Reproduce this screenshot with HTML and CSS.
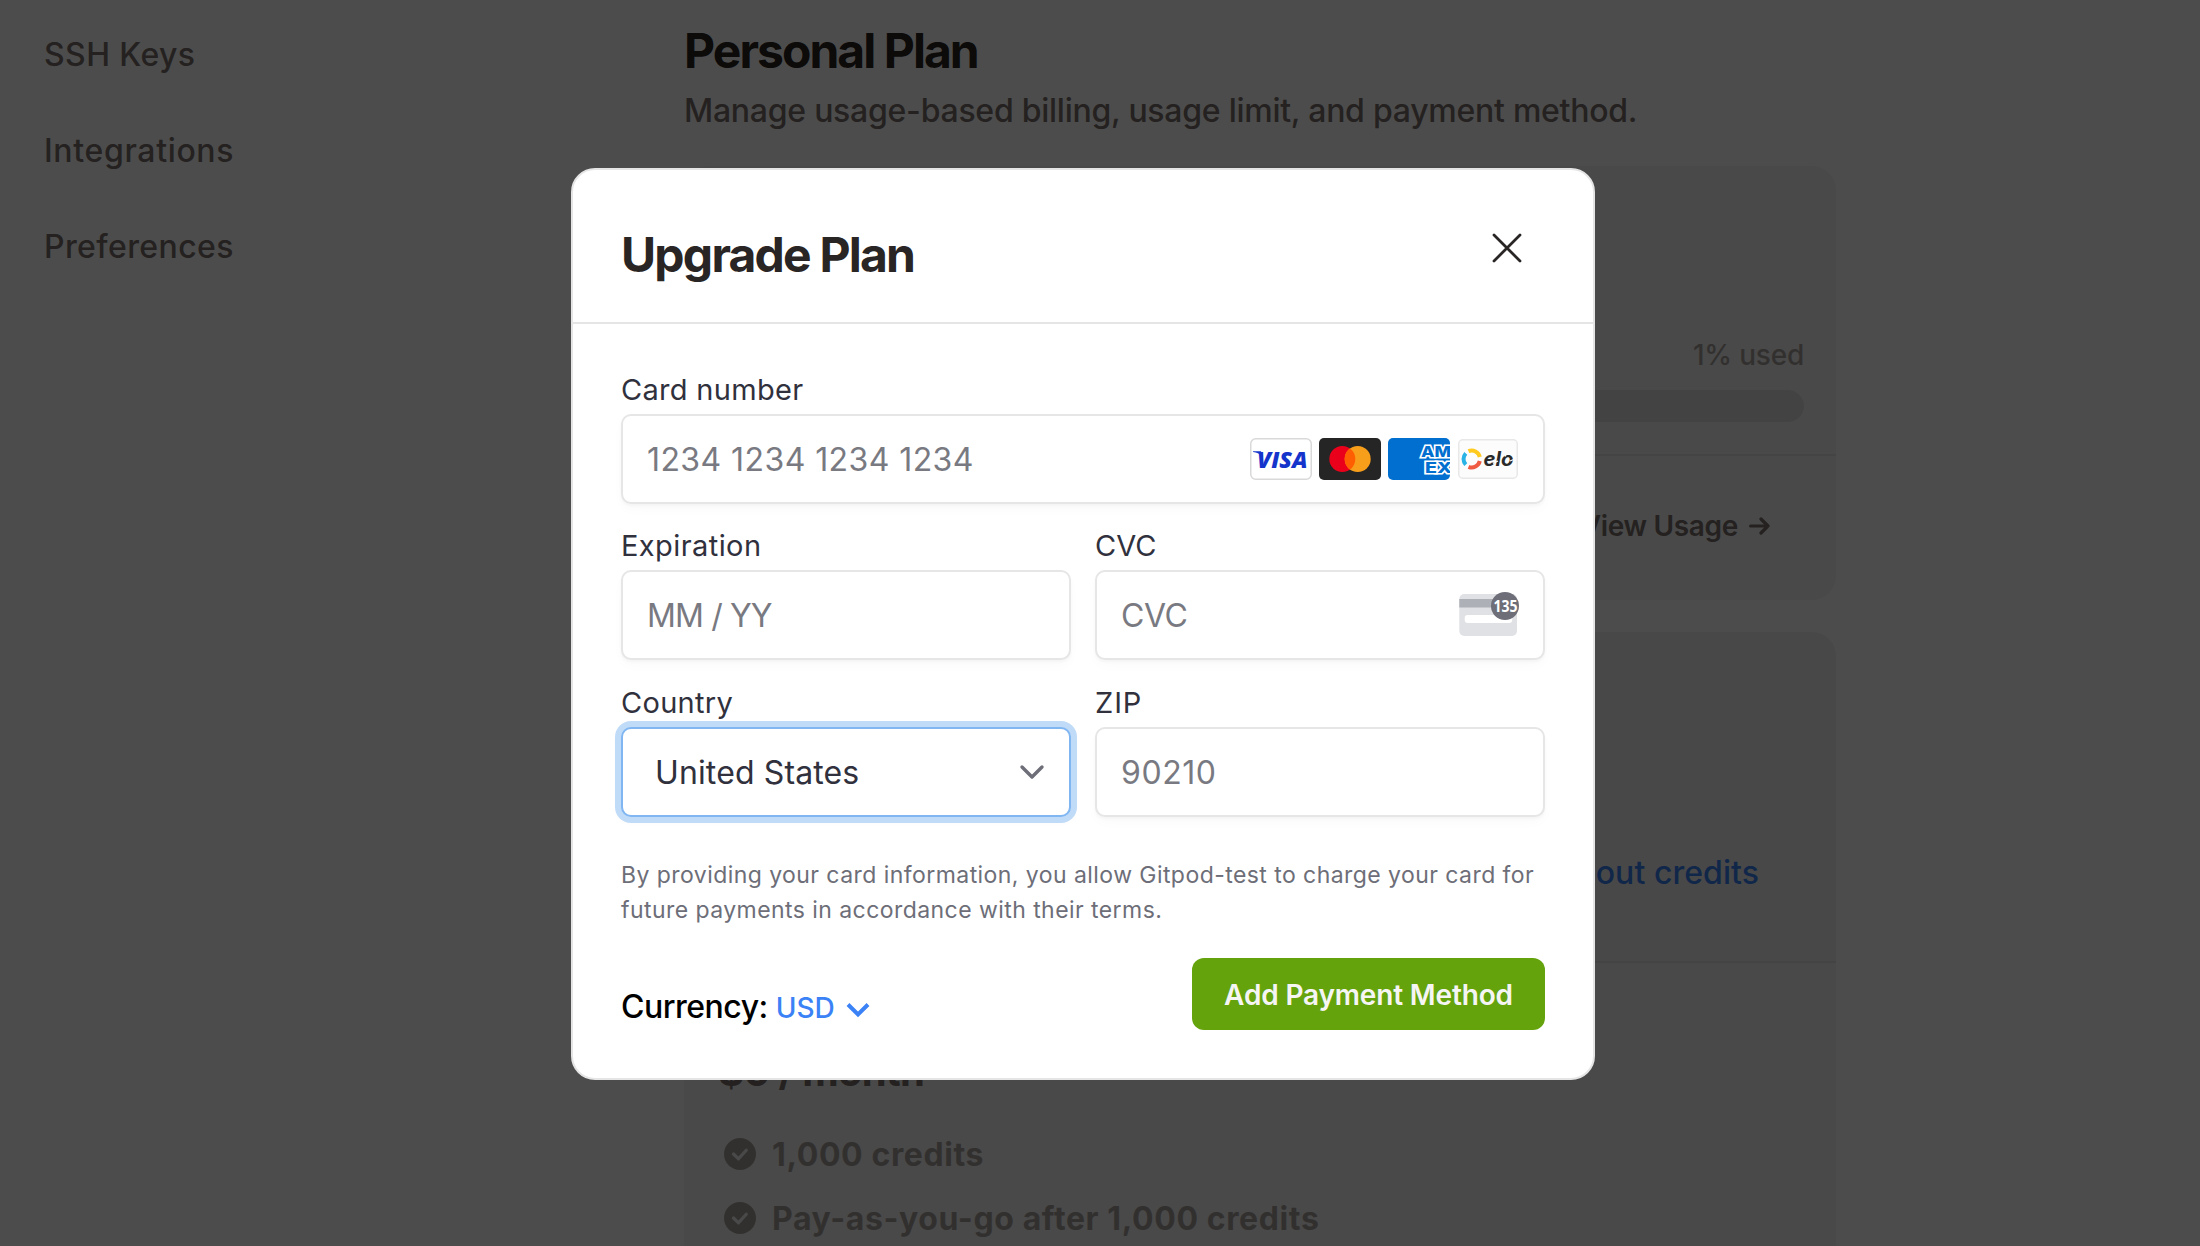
FILE: index.html
```html
<!DOCTYPE html>
<html lang="en">
<head>
<meta charset="utf-8">
<title>Upgrade Plan</title>
<link rel="stylesheet" href="styles.css">
</head>
<body>
<div class="page">
  <nav class="sidebar">
    <a>SSH Keys</a>
    <a class="integrations">Integrations</a>
    <a>Preferences</a>
  </nav>
  <main class="content">
    <h1 class="title">Personal Plan</h1>
    <p class="subtitle">Manage usage-based billing, usage limit, and payment method.</p>
    <section class="card usage-card">
      <div class="usage">
        <span class="used">1% used</span>
        <div class="bar"></div>
      </div>
      <div class="usage-link">
        <span>View Usage</span>
        <svg width="21" height="18" viewBox="0 0 21 18" fill="none" stroke="currentColor" stroke-width="3.2" stroke-linecap="round" stroke-linejoin="round"><path d="M1.600 9H19M12 2l7 7-7 7"/></svg>
      </div>
    </section>
    <section class="card plan-card">
      <div class="plan-top"><a>about credits</a></div>
      <div class="plan-body">
        <div class="price">$0 / month</div>
        <ul class="features">
          <li>
            <svg width="32" height="32" viewBox="0 0 32 32"><circle cx="16" cy="16" r="16" fill="currentColor"/><path d="M9.500 16l5 4.800 7.800-8.600" class="tick"/></svg>
            <span>1,000 credits</span>
          </li>
          <li>
            <svg width="32" height="32" viewBox="0 0 32 32"><circle cx="16" cy="16" r="16" fill="currentColor"/><path d="M9.500 16l5 4.800 7.800-8.600" class="tick"/></svg>
            <span>Pay-as-you-go after 1,000 credits</span>
          </li>
        </ul>
      </div>
    </section>
  </main>
</div>
<div class="backdrop"></div>
<div class="modal">
  <header class="modal-head">
    <h2>Upgrade Plan</h2>
    <svg class="close" width="30" height="30" viewBox="0 0 30 30" fill="none" stroke="#292524" stroke-width="2.8" stroke-linecap="round"><path d="M2 2l26 26M28 2L2 28"/></svg>
  </header>
  <div class="modal-body">
    <div class="form">
      <div class="field wide">
        <label>Card number</label>
        <div class="input">
          <span class="digits">1234 1234 1234 1234</span>
          <div class="brands">
            <svg width="62" height="42" viewBox="0 0 62 42">
              <rect x=".75" y=".75" width="60.5" height="40.5" rx="5" fill="#fff" stroke="#d9d9d9" stroke-width="1.5"/>
              <text x="7" y="29.500" textLength="50.500" lengthAdjust="spacingAndGlyphs" class="visa">VISA</text>
              <path d="M3 13.200h8l2 6C10 16 7 14.500 3 14z" fill="#1434cb"/>
            </svg>
            <svg width="62" height="42" viewBox="0 0 62 42">
              <rect width="62" height="42" rx="5" fill="#252525"/>
              <circle cx="23.300" cy="21" r="13" fill="#eb001b"/>
              <circle cx="38.700" cy="21" r="13" fill="#f79e1b"/>
              <path d="M31 10.500a13 13 0 0 1 0 21a13 13 0 0 1 0-21z" fill="#ff5f00"/>
            </svg>
            <svg width="62" height="42" viewBox="0 0 62 42">
              <rect width="62" height="42" rx="5" fill="#016fd0"/>
              <text x="33" y="19" textLength="30" lengthAdjust="spacingAndGlyphs" class="amex">AM</text>
              <text x="37" y="34.500" textLength="27" lengthAdjust="spacingAndGlyphs" class="amex">EX</text>
            </svg>
            <svg width="62" height="42" viewBox="0 0 62 42">
              <rect x="1.750" y="1.750" width="58.500" height="38.500" rx="4" fill="#fcfcfc" stroke="#e8e8e8" stroke-width="1.500"/>
              <g fill="none" stroke-width="4">
                <path d="M11.500 13.200A8.300 8.300 0 0 1 22.800 19" stroke="#ffcb20"/>
                <path d="M22.800 23A8.300 8.300 0 0 1 11.500 28.800" stroke="#ef5b43"/>
                <path d="M8.800 15.300A8.300 8.300 0 0 0 8.800 26.700" stroke="#2bb3e6"/>
              </g>
              <text x="26.500" y="27.500" textLength="30" lengthAdjust="spacingAndGlyphs" class="elo">elo</text>
              <path d="M36 25.500l5-2.500M50 14.500l-2 4M59 20.500l-6 2.500" stroke="#fcfcfc" stroke-width="1.300"/>
            </svg>
          </div>
        </div>
      </div>
      <div class="field">
        <label class="expiration">Expiration</label>
        <div class="input"><span class="date">MM / YY</span></div>
      </div>
      <div class="field">
        <label class="cvc">CVC</label>
        <div class="input">
          <span class="code">CVC</span>
          <svg class="cvc-icon" width="62" height="44" viewBox="0 0 62 44">
            <rect x="1.300" y="2" width="57.700" height="42" rx="5" fill="#e0e1e4"/>
            <rect x="1.300" y="7" width="57.700" height="8.500" fill="#aeb0b8"/>
            <rect x="6.700" y="23" width="47.500" height="8" rx="3" fill="#fff"/>
            <circle cx="47" cy="14" r="14" fill="#6d6e78"/>
            <text x="35.500" y="19.800" textLength="24" lengthAdjust="spacingAndGlyphs" class="cvc-code">135</text>
          </svg>
        </div>
      </div>
      <div class="field">
        <label>Country</label>
        <div class="input focused">
          <span>United States</span>
          <svg width="26" height="16" viewBox="0 0 26 16" fill="none" stroke="#6d6e78" stroke-width="3.400" stroke-linecap="round" stroke-linejoin="round"><path d="M3 3l10 10 10-10"/></svg>
        </div>
      </div>
      <div class="field">
        <label class="zip">ZIP</label>
        <div class="input"><span class="postal">90210</span></div>
      </div>
    </div>
    <p class="legal">By providing your card information, you allow Gitpod-test to charge your card for<br>future payments in accordance with their terms.</p>
    <footer class="modal-foot">
      <div class="currency">
        <span>Currency:</span>
        <a>USD</a>
        <svg width="24" height="16" viewBox="0 0 24 16" fill="none" stroke="#3b82f6" stroke-width="4"><path d="M2 2.500l10 10 10-10"/></svg>
      </div>
      <button class="submit">Add Payment Method</button>
    </footer>
  </div>
</div>
</body>
</html>
```
FILE: styles.css
```css
* { box-sizing: border-box; margin: 0; padding: 0; }

body {
  width: 2200px;
  height: 1246px;
  overflow: hidden;
  position: relative;
  background: #fff;
  font-family: Inter, "Liberation Sans", sans-serif;
  font-size: 32px;
  line-height: 40px;
}

svg { display: block; flex: none; }

/* Page behind the dialog */
.page { display: flex; height: 1246px; overflow: hidden; }

.sidebar {
  width: 684px;
  flex: none;
  padding: 35px 0 0 44px;
  display: flex;
  flex-direction: column;
  gap: 56px;
  color: #78716c;
  font-weight: 500;
  letter-spacing: 0.4px;
}
.sidebar .integrations { letter-spacing: 0.65px; }

.content { width: 1152px; flex: none; padding-top: 23px; }
.title {
  font-size: 48px;
  line-height: 56px;
  font-weight: 700;
  letter-spacing: -1.95px;
  color: #292524;
}
.subtitle {
  margin-top: 12px;
  color: #78716c;
  font-weight: 500;
  letter-spacing: -0.26px;
}

.card { background: #f5f5f4; border-radius: 24px; overflow: hidden; }

.usage-card { margin-top: 35px; height: 434px; display: flex; flex-direction: column; }
.usage {
  height: 290px;
  padding: 0 32px 32px;
  border-bottom: 2px solid #e7e5e4;
  display: flex;
  flex-direction: column;
  justify-content: flex-end;
  gap: 15px;
}
.used { align-self: flex-end; font-size: 28px; font-weight: 500; color: #a8a29e; letter-spacing: -0.21px; }
.bar { height: 32px; border-radius: 16px; background: #e2e1df; }
.usage-link {
  flex: 1;
  display: flex;
  justify-content: flex-end;
  align-items: center;
  gap: 11px;
  padding: 0 66px 5px 0;
  font-size: 28px;
  font-weight: 600;
  letter-spacing: -0.32px;
  color: #78716c;
}

.plan-card { margin-top: 32px; height: 800px; }
.plan-top {
  height: 329px;
  padding: 221px 77px 0 0;
  background: #f2f2f2;
  text-align: right;
  color: #3b82f6;
  font-weight: 500;
  letter-spacing: 0.05px;
}
.plan-body { height: 471px; padding: 85px 34px 0; border-top: 2px solid #e7e5e4; }
.price { font-size: 40px; line-height: 48px; font-weight: 700; letter-spacing: -0.7px; color: #78716c; }
.features {
  list-style: none;
  padding: 38px 0 0 6px;
  display: flex;
  flex-direction: column;
  gap: 24px;
  color: #a8a29e;
  font-weight: 700;
  letter-spacing: 0.6px;
}
.features li { display: flex; align-items: center; gap: 16px; }
.features span { padding-top: 1px; margin-bottom: -1px; }
.tick { fill: none; stroke: #f5f5f4; stroke-width: 3.2; stroke-linecap: round; stroke-linejoin: round; }

.backdrop { position: absolute; inset: 0; background: rgba(0, 0, 0, 0.7); }

/* Dialog */
.modal {
  position: absolute;
  left: 571px;
  top: 168px;
  width: 1024px;
  height: 912px;
  border: 2px solid #e5e5e5;
  border-radius: 24px;
  background: #fff;
}
.modal-head {
  height: 154px;
  padding: 57px 71px 0 48px;
  border-bottom: 2px solid #e5e5e5;
  display: flex;
  justify-content: space-between;
}
.modal-head h2 {
  font-size: 48px;
  line-height: 56px;
  font-weight: 700;
  letter-spacing: -1.78px;
  color: #292524;
}
.close { margin-top: 6px; }

.modal-body { padding: 48px 48px 0; }
.form { display: grid; grid-template-columns: 1fr 1fr; column-gap: 24px; row-gap: 24.4px; }
.field { display: flex; flex-direction: column; gap: 6px; }
.field.wide { grid-column: span 2; }
.field label { font-size: 29px; line-height: 36px; letter-spacing: 0.3px; color: #30313d; }
.field .expiration { letter-spacing: 0.42px; }
.field .cvc { letter-spacing: 0; }
.field .zip { letter-spacing: 0.9px; }

.input {
  height: 90px;
  padding: 0 24px;
  border: 2px solid #e6e6e6;
  border-radius: 10px;
  background: #fff;
  box-shadow: 0 2px 3px rgba(0, 0, 0, 0.03), 0 6px 12px rgba(0, 0, 0, 0.02);
  display: flex;
  justify-content: space-between;
  align-items: center;
  color: #797a81;
}
.input > span { padding-top: 2px; }
.digits { letter-spacing: 0.42px; }
.date { letter-spacing: -0.88px; }
.code { letter-spacing: -0.5px; }
.postal { letter-spacing: 0.56px; }

.focused {
  padding: 0 24px 0 32px;
  border-color: #80b6f2;
  box-shadow: 0 0 0 6px #c0dbf8, 0 2px 3px 6px rgba(0, 0, 0, 0.01);
  color: #30313d;
  letter-spacing: 0.13px;
}

.brands { display: flex; gap: 7px; }
.visa { font: italic 800 23px "Open Sans", "Noto Sans", sans-serif; fill: #1434cb; }
.amex { font: 800 15px Inter, sans-serif; fill: #016fd0; stroke: #fff; stroke-width: 3px; paint-order: stroke; }
.elo { font: italic 700 20px Inter, sans-serif; fill: #2a2a2a; }
.cvc-icon { margin: -3px -1px 0 0; }
.cvc-code { font: 700 16px "Noto Sans", sans-serif; fill: #fff; }

.legal {
  margin-top: 41px;
  font-size: 23px;
  line-height: 35px;
  letter-spacing: 0.44px;
  white-space: nowrap;
  color: #6d6e78;
}

.modal-foot {
  margin-top: 30px;
  height: 72px;
  display: flex;
  justify-content: space-between;
  align-items: flex-end;
}
.currency { display: flex; align-items: baseline; padding-bottom: 2px; color: #000; font-weight: 500; letter-spacing: -0.5px; }
.currency a { margin-left: 8px; font-size: 28px; font-weight: 500; letter-spacing: 0; color: #3b82f6; }
.currency svg { margin-left: 11px; }

.submit {
  width: 353px;
  height: 72px;
  padding-top: 2px;
  border: 0;
  border-radius: 12px;
  background: #65a30d;
  color: #f5f5f4;
  font: 600 28px Inter, sans-serif;
  letter-spacing: -0.16px;
}
```
